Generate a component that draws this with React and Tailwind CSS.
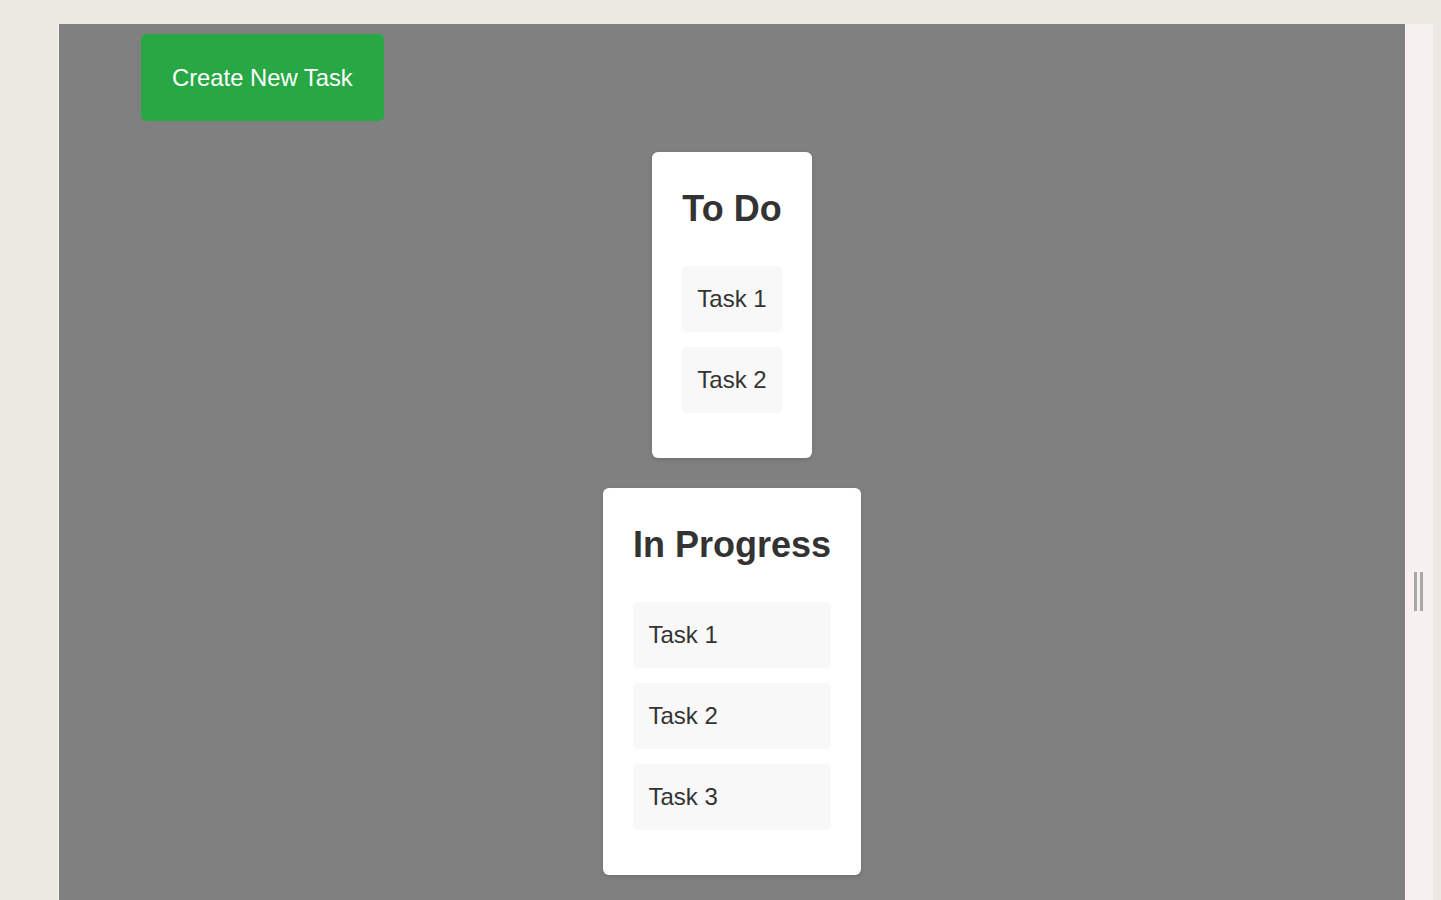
import React from "react";

const columns = [
  { title: "To Do", tasks: ["Task 1", "Task 2"] },
  { title: "In Progress", tasks: ["Task 1", "Task 2", "Task 3"] },
];

function Column({ title, tasks }) {
  return (
    <div className="flex flex-col bg-white rounded-[6px] p-[30px] shadow-[0_2px_5px_rgba(0,0,0,0.12)]">
      <h2 className="text-center text-[36px] font-bold leading-[54px] mb-[30px] text-[#333333] whitespace-nowrap">
        {title}
      </h2>
      {tasks.map((task) => (
        <div
          key={task}
          className="h-[66px] flex items-center px-[15.5px] mb-[15px] bg-[#f8f8f8] rounded-[5px] text-[24px] text-[#333333] whitespace-nowrap"
        >
          {task}
        </div>
      ))}
    </div>
  );
}

export default function App() {
  return (
    <div
      className="min-h-screen flex bg-[#ece8e2]"
      style={{ fontFamily: '"Liberation Sans", Arial, sans-serif' }}
    >
      <div className="w-[58px] shrink-0" />
      <main className="mt-6 w-[1347px] shrink-0 bg-[#808080] border-l border-[#f4f2ee]">
        <div className="pt-[10px] pl-[82px]">
          <button className="h-[87px] px-[31px] bg-[#28a745] text-white text-[23.8px] rounded-[5px]">
            Create New Task
          </button>
        </div>
        <div className="flex flex-col items-center gap-[30px] mt-[31px]">
          {columns.map((col) => (
            <Column key={col.title} {...col} />
          ))}
        </div>
      </main>
      <aside className="mt-6 w-[28px] shrink-0 bg-[#f6f1f0]">
        <div className="mt-[548px] ml-[9px] flex gap-[3px]">
          <div className="w-[3px] h-[39px] bg-[#a8a8a8]" />
          <div className="w-[3px] h-[39px] bg-[#a8a8a8]" />
        </div>
      </aside>
    </div>
  );
}
